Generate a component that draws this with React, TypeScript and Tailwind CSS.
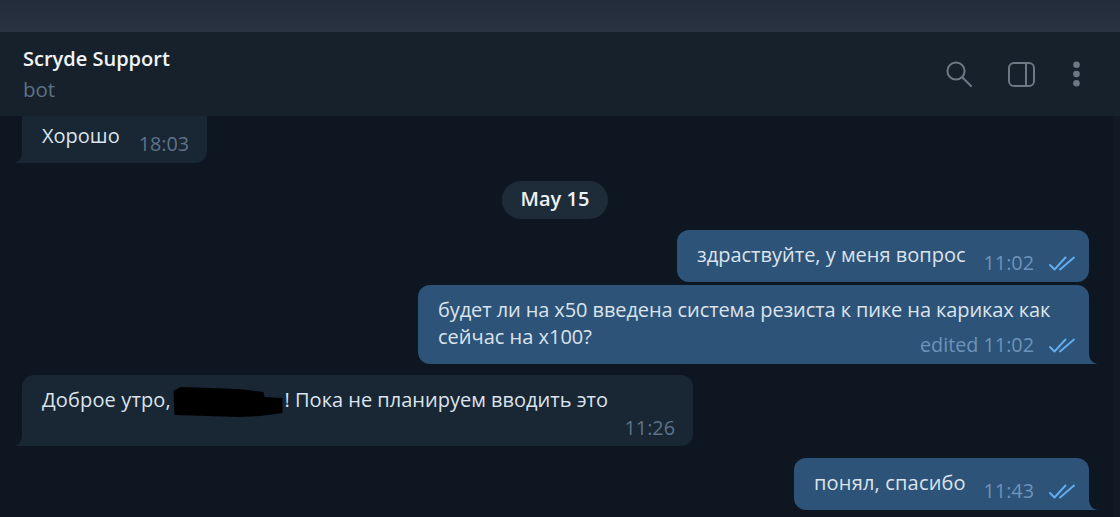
import type { ReactNode } from "react";

const font = { fontFamily: '"Open Sans", "Noto Sans", sans-serif' };

function Checks() {
  return (
    <svg width="26" height="15" viewBox="0 0 26 15" fill="none" stroke="#62aef0" strokeWidth="1.9" strokeLinecap="round" strokeLinejoin="round" className="shrink-0">
      <path d="M1 9 L5.5 13.5 L16.5 1.5" />
      <path d="M11 13.5 L25 1.5" />
    </svg>
  );
}

function TailLeft() {
  return (
    <svg width="10" height="14" viewBox="0 0 10 14" className="absolute -left-[9px] bottom-0" fill="#192634">
      <path d="M9 0 H10 V14 H0 C5 13.5 9 10 9 3 Z" />
    </svg>
  );
}

function TailRight() {
  return (
    <svg width="10" height="14" viewBox="0 0 10 14" className="absolute -right-[9px] bottom-0" fill="#2e5378">
      <path d="M1 0 H0 V14 H10 C5 13.5 1 10 1 3 Z" />
    </svg>
  );
}

function Outgoing({ width, height, text, time, tail }: { width: string; height: string; text: ReactNode; time: string; tail?: boolean }) {
  return (
    <div className={`relative ${width} ${height} bg-[#2e5378] ${tail ? "rounded-t-[12px] rounded-bl-[12px]" : "rounded-[12px]"} pl-[20px] pr-[14px] pt-[11px] pb-[7px] grid`}>
      <div className="[grid-area:1/1] self-start text-[20px] leading-[27px] text-[#dbe4ec]">{text}</div>
      <div className="[grid-area:1/1] self-end justify-self-end flex items-center gap-[15px]">
        <span className="text-[19.8px] leading-[24px] text-[#6c93bb]">{time}</span>
        <Checks />
      </div>
      {tail && <TailRight />}
    </div>
  );
}

export default function App() {
  return (
    <div className="w-[1120px] h-[517px] overflow-hidden bg-[#0e1621] flex flex-col" style={font}>
      <div className="h-[32px] shrink-0 bg-gradient-to-b from-[#232c3b] to-[#293342]" />
      <header className="h-[84px] shrink-0 bg-[#17212b] flex items-center justify-between pl-[23px] pr-[40px]">
        <div className="flex flex-col pt-[6px]">
          <span className="text-[20px] leading-[26px] font-semibold text-[#f0f4f7]">Scryde Support</span>
          <span className="text-[20.5px] leading-[36px] -mt-[1px] mb-[1px] text-[#5e7185]">bot</span>
        </div>
        <div className="flex items-center gap-[36px] text-[#6c7883]">
          <svg width="26" height="26" viewBox="0 0 26 26" fill="none" stroke="currentColor" strokeWidth="2" strokeLinecap="round">
            <circle cx="10" cy="10" r="8.6" />
            <path d="M16.5 16.5 L25 25" />
          </svg>
          <svg width="27" height="25" viewBox="0 0 27 25" fill="none" stroke="currentColor" strokeWidth="2" className="mr-[2px]">
            <rect x="1" y="1" width="25" height="23" rx="5" />
            <path d="M18 1 V24" />
          </svg>
          <svg width="7" height="26" viewBox="0 0 7 26" fill="currentColor">
            <circle cx="3.5" cy="3.7" r="3.3" />
            <circle cx="3.5" cy="13" r="3.3" />
            <circle cx="3.5" cy="22.3" r="3.3" />
          </svg>
        </div>
      </header>
      <main className="relative flex-1 flex flex-col border-r-[7px] border-r-[#111a24]">
        <div className="relative ml-[22px] w-[185px] h-[47px] bg-[#192634] rounded-br-[12px] pl-[20px] flex">
          <span className="text-[20px] leading-[27px] pt-[6px] text-[#dbe4ec]">Хорошо</span>
          <span className="ml-[19px] pt-[13px] text-[19.8px] leading-[30px] text-[#5d7389]">18:03</span>
          <TailLeft />
        </div>
        <div className="mt-[18px] self-center ml-[-3px] flex">
          <span className="h-[38px] w-[106px] bg-[#1e2c3a] rounded-full text-[20px] leading-[36px] font-semibold text-center text-[#eef2f5]">May 15</span>
        </div>
        <div className="mt-[11px] pr-[24px] flex flex-col items-end gap-[3px]">
          <Outgoing width="w-[412px]" height="h-[52px]" text="здраствуйте, у меня вопрос" time="11:02" />
          <Outgoing
            width="w-[671px]"
            height="h-[79px]"
            tail
            text={<><span className="tracking-[-0.1px]">будет ли на x50 введена система резиста к пике на кариках как</span><br />сейчас на x100?</>}
            time="edited 11:02"
          />
        </div>
        <div className="relative mt-[11px] ml-[22px] w-[671px] h-[71px] bg-[#192634] rounded-t-[12px] rounded-br-[12px] pl-[20px] pr-[18px] pt-[11px] pb-[6px] grid">
          <div className="[grid-area:1/1] self-start text-[20px] leading-[27px] text-[#dbe4ec] whitespace-nowrap">
            <span className="tracking-[0.14px]">Доброе утро,</span>{" "}
            <svg width="111" height="31" viewBox="0 0 110 31" fill="#000" className="inline-block align-middle -my-[6px] -ml-[4px]">
              <path d="M1 5 L8 1 L66 3 L91 6 L92 11 L110 12 L110 27 L88 30 L66 31 L2 29 Z" />
            </svg>
            <span className="ml-[1.5px]">! Пока не планируем вводить это</span>
          </div>
          <span className="[grid-area:1/1] self-end justify-self-end text-[19.8px] leading-[24px] text-[#5d7389]">11:26</span>
          <TailLeft />
        </div>
        <div className="mt-[12px] pr-[24px] flex flex-col items-end">
          <Outgoing width="w-[295px]" height="h-[52px]" tail text={<span className="tracking-[0.18px]">понял, спасибо</span>} time="11:43" />
        </div>
      </main>
    </div>
  );
}
